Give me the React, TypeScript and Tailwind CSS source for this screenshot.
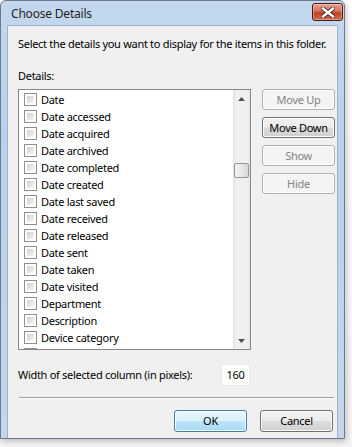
import React from 'react';

const ITEMS = [
  'Date',
  'Date accessed',
  'Date acquired',
  'Date archived',
  'Date completed',
  'Date created',
  'Date last saved',
  'Date received',
  'Date released',
  'Date sent',
  'Date taken',
  'Date visited',
  'Department',
  'Description',
  'Device category',
  'Dimensions',
];

const Checkbox: React.FC = () => (
  <div className="w-[13px] h-[13px] border border-[#8e8f8f] bg-white p-[2px] shrink-0">
    <div className="w-full h-full bg-gradient-to-br from-[#cdd1d6] to-[#f7f7f7]" />
  </div>
);

const WinButton: React.FC<{ label: string; disabled?: boolean; primary?: boolean; className?: string }> = ({
  label,
  disabled,
  primary,
  className,
}) => {
  let cls =
    'border-[#707070] bg-[linear-gradient(#f2f2f2_0%,#ebebeb_49%,#dddddd_51%,#cfcfcf_100%)] text-black shadow-[inset_0_0_0_1px_#fcfcfc]';
  if (disabled) cls = 'border-[#adb2b5] bg-[#f4f4f4] text-[#838383] shadow-[inset_0_0_0_1px_#fcfcfc]';
  if (primary)
    cls =
      'border-[#3c7fb1] bg-[linear-gradient(#eaf6fd_0%,#d9f0fc_49%,#bee6fd_51%,#a7d9f5_100%)] text-black shadow-[inset_0_0_0_1px_#ffffff]';
  return (
    <div
      className={`h-[21px] shrink-0 flex items-center justify-center rounded-[3px] border leading-[16px] ${cls} ${className ?? ''}`}
    >
      {label}
    </div>
  );
};

const Arrow: React.FC<{ up?: boolean }> = ({ up }) => (
  <svg width="7" height="4" viewBox="0 0 7 4">
    {up ? <path d="M3.5 0 L7 4 L0 4 Z" fill="#4d4d4d" /> : <path d="M0 0 L7 0 L3.5 4 Z" fill="#4d4d4d" />}
  </svg>
);

export default function App() {
  return (
    <div
      className="w-[352px] h-[447px] bg-[linear-gradient(#ffffff,#f4f4f4)] text-black overflow-hidden text-[11px] tracking-[-0.3px]"
      style={{ fontFamily: '"Noto Sans", "Open Sans", sans-serif' }}
    >
      <div className="w-[345px] h-[439px] border border-[#6d7a89] rounded-t-[6px] bg-[linear-gradient(#c3d8ee,#b9d1ea_30%,#c3d6ec)] flex flex-col shadow-[1px_2px_6px_rgba(0,0,0,0.25)]">
        {/* title bar */}
        <div className="h-[24px] flex items-center justify-between pl-[10px] pr-[1px] shrink-0">
          <span className="text-[12px] leading-[16px] text-[#1e1e1e] pt-[1px] tracking-[-0.2px]">Choose Details</span>
          <div className="w-[31px] h-[18px] rounded-[3px] border border-[#4a1812] bg-[linear-gradient(#e8a193,#d8705c_45%,#c13f26_55%,#d26a4f)] flex items-center justify-center mt-[-2px] shadow-[inset_0_0_0_1px_rgba(255,255,255,0.35)]">
            <svg width="14" height="11" viewBox="0 0 14 11">
              <path d="M2 1.5 L12 9.5 M12 1.5 L2 9.5" stroke="#3a2b2b" strokeWidth="4.2" strokeLinecap="square" />
              <path d="M2 1.5 L12 9.5 M12 1.5 L2 9.5" stroke="#ffffff" strokeWidth="2.4" strokeLinecap="square" />
            </svg>
          </div>
        </div>
        {/* body */}
        <div className="flex-1 flex pl-[6px] pr-[6px] min-h-0 min-w-0">
          <div className="flex-1 min-w-0 bg-[#f0f0f0] border-t border-l border-r border-[#9eb3cb] flex flex-col pl-[10px] pr-[4px] leading-[16px]">
            <div className="mt-[10px] whitespace-nowrap">
              Select the details you want to display for the items in this folder.
            </div>
            <div className="mt-[16px]">Details:</div>
            <div className="flex mt-[5px]">
              {/* list box */}
              <div className="w-[233px] h-[261px] shrink-0 border border-[#828790] bg-white flex">
                <div className="flex-1 overflow-hidden pt-[1px] pl-[5px]">
                  {ITEMS.map((item) => (
                    <div key={item} className="h-[17px] flex items-center gap-[4px]">
                      <Checkbox />
                      <span className="leading-[17px] whitespace-nowrap">{item}</span>
                    </div>
                  ))}
                </div>
                <div className="w-[17px] bg-[linear-gradient(90deg,#e3e3e3,#f0f0f0_20%,#f0f0f0_80%,#e6e6e6)] flex flex-col items-center">
                  <div className="h-[17px] flex items-center justify-center">
                    <Arrow up />
                  </div>
                  <div className="h-[56px]" />
                  <div className="w-[15px] h-[15px] rounded-[2px] border border-[#969696] bg-[linear-gradient(90deg,#f3f3f3,#e8e8e8_50%,#d6d6d6)]" />
                  <div className="flex-1" />
                  <div className="h-[17px] flex items-center justify-center">
                    <Arrow />
                  </div>
                </div>
              </div>
              {/* side buttons */}
              <div className="flex flex-col ml-[11px] w-[73px] shrink-0">
                <WinButton label="Move Up" disabled />
                <WinButton label="Move Down" className="mt-[7px] border-[#505050]" />
                <WinButton label="Show" disabled className="mt-[7px]" />
                <WinButton label="Hide" disabled className="mt-[7px]" />
              </div>
            </div>
            <div className="flex items-center mt-[14px] h-[22px]">
              <span className="w-[203px] whitespace-nowrap">Width of selected column (in pixels):</span>
              <div className="w-[29px] h-[22px] bg-white border border-[#eaeaea] flex items-center justify-center">
                160
              </div>
            </div>
            <div className="h-[1px] bg-[#a0a0a0] border-b border-white box-content w-[315px] mt-[11px] ml-[1px]" />
            <div className="flex justify-end mt-[11px] gap-[13px]">
              <WinButton label="OK" primary className="w-[73px] h-[22px]" />
              <WinButton label="Cancel" className="w-[73px] h-[22px]" />
            </div>
          </div>
        </div>
      </div>
    </div>
  );
}
